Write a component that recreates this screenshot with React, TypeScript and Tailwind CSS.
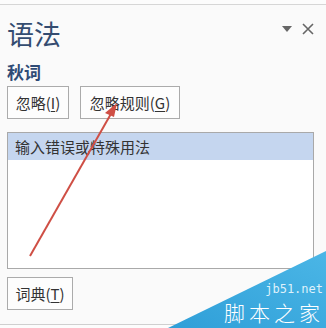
import React from 'react'

const font = { fontFamily: '"Noto Sans CJK SC", "Noto Sans", sans-serif' }

function PaneButton({ label, hotkey, width }: { label: string; hotkey: string; width: string }) {
  return (
    <div
      className={`${width} h-[33px] border border-[#ababab] bg-[#fdfdfd] flex items-center justify-center text-[15px] text-[#333] leading-none`}
    >
      {label}(<span className="underline underline-offset-2">{hotkey}</span>)
    </div>
  )
}

export default function App() {
  return (
    <div className="relative w-[326px] h-[328px] overflow-hidden bg-[#fcfcfc]" style={font}>
      <div className="h-[4px]" />
      <div className="border-t border-[#d6d6d6] h-[320px] px-[7px] flex flex-col bg-[#fafafa]">
        <div className="flex items-start justify-between mt-[15px]">
          <div className="text-[27px] leading-none text-[#344c70]">语法</div>
          <div className="flex items-center gap-[10px] mt-[3px] mr-[5px]">
            <svg width="10" height="6" viewBox="0 0 10 6">
              <path d="M0 0 L10 0 L5 6 Z" fill="#666" />
            </svg>
            <svg width="12" height="12" viewBox="0 0 12 12">
              <path d="M1 1 L11 11 M11 1 L1 11" stroke="#666" strokeWidth="1.6" />
            </svg>
          </div>
        </div>
        <div className="mt-[16px] text-[17px] font-bold leading-none text-[#2f4b76]">秋词</div>
        <div className="flex gap-[11px] mt-[6px]">
          <PaneButton label="忽略" hotkey="I" width="w-[62px]" />
          <PaneButton label="忽略规则" hotkey="G" width="w-[100px]" />
        </div>
        <div className="mt-[13px] w-[307px] h-[137px] border border-[#a9a9a9] bg-white">
          <div className="h-[27px] bg-[#c5d6ef] flex items-center pl-[7px] text-[15px] text-[#333] leading-none">
            输入错误或特殊用法
          </div>
        </div>
        <div className="mt-[8px]">
          <PaneButton label="词典" hotkey="T" width="w-[66px]" />
        </div>
      </div>
      <div className="border-t border-[#cfcfcf]" />

      {/* red arrow */}
      <svg className="absolute left-0 top-0" width="326" height="328">
        <line x1="30" y1="256" x2="112" y2="112" stroke="#cf4f45" strokeWidth="2" />
        <path d="M117 103 L105 113 L114 117 Z" fill="#cf4f45" />
      </svg>

      {/* watermark */}
      <svg className="absolute left-0 top-0" width="326" height="328">
        <defs>
          <linearGradient id="wm" x1="0" y1="1" x2="1" y2="0">
            <stop offset="0" stopColor="#2f9fd8" />
            <stop offset="1" stopColor="#4bb6e6" />
          </linearGradient>
        </defs>
        <path d="M326 251 L326 328 L168 328 Z" fill="url(#wm)" />
      </svg>
      <div
        className="absolute right-[3px] top-[282px] text-[12px] leading-[14px] text-[#dff1fb]"
        style={{ fontFamily: '"DejaVu Sans Mono", monospace' }}
      >
        jb51.net
      </div>
      <div className="absolute right-[2px] top-[297px] text-[21px] leading-[30px] text-white tracking-[4px] font-light">
        脚本之家
      </div>
    </div>
  )
}
